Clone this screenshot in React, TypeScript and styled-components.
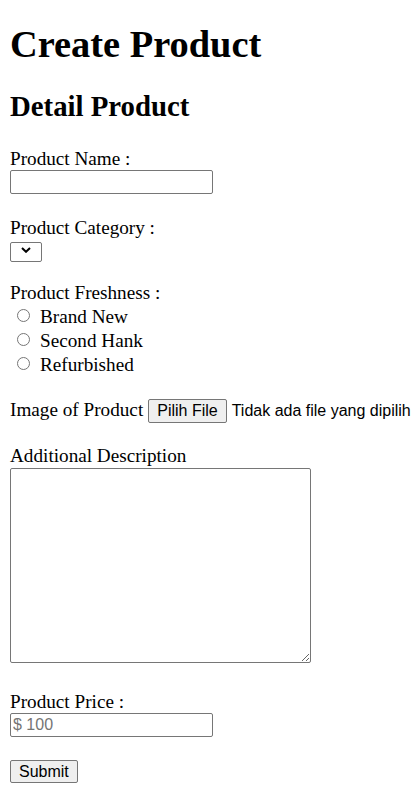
import React from "react";
import styled, { createGlobalStyle } from "styled-components";

const Global = createGlobalStyle`
  html, body { background: #fff; }
  body {
    margin: 0;
    font-family: "Liberation Serif", "Times New Roman", serif;
    font-size: 19.2px;
    color: #000;
  }
`;

const Page = styled.div`
  display: flow-root;
  padding: 0 10px;
`;

const Title = styled.h1`
  font-size: 38.4px;
  font-weight: bold;
  line-height: 44px;
  margin: 21.7px 0 24.8px;
`;

const Subtitle = styled.h2`
  font-size: 28.8px;
  font-weight: bold;
  line-height: 33px;
  margin: 0 0 24.5px;
`;

const Form = styled.form`
  display: flex;
  flex-direction: column;
  align-items: flex-start;
`;

const Field = styled.div<{ $after: number }>`
  display: flex;
  flex-direction: column;
  align-items: flex-start;
  margin-bottom: ${(p) => p.$after}px;
`;

const Label = styled.label<{ $gap?: number }>`
  display: block;
  line-height: 22px;
  white-space: nowrap;
  margin-bottom: ${(p) => p.$gap ?? 0}px;
`;

const TextInput = styled.input`
  box-sizing: border-box;
  width: 203px;
  height: 24px;
  margin: 0;
  padding: 1px 2px;
  border: 1px solid #767676;
  border-radius: 2px;
  font-family: "Liberation Sans", Arial, sans-serif;
  font-size: 16px;
  color: #000;
  background: #fff;
  outline: none;
  &::placeholder {
    color: #757575;
  }
`;

const SelectWrap = styled.div`
  position: relative;
  width: 32px;
  height: 20px;
`;

const Select = styled.select`
  appearance: none;
  box-sizing: border-box;
  width: 32px;
  height: 20px;
  margin: 0;
  padding: 0;
  border: 1px solid #767676;
  border-radius: 2px;
  background: #fff;
  font-family: "Liberation Sans", Arial, sans-serif;
  font-size: 16px;
`;

const Chevron = styled.svg`
  position: absolute;
  left: 11px;
  top: 6.5px;
  pointer-events: none;
`;

const RadioList = styled.div`
  display: flex;
  flex-direction: column;
`;

const RadioRow = styled.label`
  display: flex;
  align-items: center;
  height: 24px;
  line-height: 22px;
  white-space: nowrap;
`;

const Radio = styled.input`
  appearance: none;
  flex-shrink: 0;
  box-sizing: border-box;
  width: 13px;
  height: 13px;
  margin: 0 10.5px 2px 6.5px;
  border: 1px solid #767676;
  border-radius: 50%;
  background: #fff;
`;

const FileRow = styled.div`
  display: flex;
  align-items: baseline;
  line-height: 22px;
  white-space: nowrap;
  margin-bottom: 22px;
  & > * {
    flex-shrink: 0;
  }
`;

const FileLabel = styled.span`
  margin-right: 5px;
`;

const Button = styled.button`
  box-sizing: border-box;
  flex-shrink: 0;
  height: 24px;
  margin: 0;
  padding: 0 8px;
  border: 1px solid #767676;
  border-radius: 2px;
  background: #efefef;
  color: #000;
  font-family: "Liberation Sans", Arial, sans-serif;
  font-size: 16px;
  line-height: 20px;
  white-space: nowrap;
`;

const FileText = styled.span`
  margin-left: 5px;
  font-family: "Liberation Sans", Arial, sans-serif;
  font-size: 16px;
  white-space: nowrap;
`;

const TextArea = styled.textarea`
  box-sizing: border-box;
  width: 301px;
  height: 195px;
  margin: 0;
  padding: 2px;
  border: 1px solid #767676;
  border-radius: 2px;
  font-family: "Liberation Mono", monospace;
  font-size: 16px;
  outline: none;
`;

const Submit = styled(Button)`
  height: 23px;
  line-height: 19px;
`;

export default function App() {
  return (
    <Page>
      <Global />
      <Title>Create Product</Title>
      <Subtitle>Detail Product</Subtitle>
      <Form onSubmit={(e) => e.preventDefault()}>
        <Field $after={23}>
          <Label htmlFor="name">Product Name :</Label>
          <TextInput id="name" type="text" />
        </Field>
        <Field $after={21}>
          <Label htmlFor="cat" $gap={2}>Product Category :</Label>
          <SelectWrap>
            <Select id="cat" defaultValue="">
              <option value=""></option>
            </Select>
            <Chevron width="10" height="6" viewBox="0 0 10 6">
              <path d="M1 1l4 3.8L9 1" fill="none" stroke="#000" strokeWidth="2" />
            </Chevron>
          </SelectWrap>
        </Field>
        <Field $after={22}>
          <Label $gap={1}>Product Freshness :</Label>
          <RadioList>
            <RadioRow>
              <Radio type="radio" name="fresh" />
              Brand New
            </RadioRow>
            <RadioRow>
              <Radio type="radio" name="fresh" />
              Second Hank
            </RadioRow>
            <RadioRow>
              <Radio type="radio" name="fresh" />
              Refurbished
            </RadioRow>
          </RadioList>
        </Field>
        <FileRow>
          <FileLabel>Image of Product</FileLabel>
          <Button type="button">Pilih File</Button>
          <FileText>Tidak ada file yang dipilih</FileText>
        </FileRow>
        <Field $after={28}>
          <Label htmlFor="desc" $gap={1}>Additional Description</Label>
          <TextArea id="desc" />
        </Field>
        <Field $after={23}>
          <Label htmlFor="price">Product Price :</Label>
          <TextInput id="price" type="text" placeholder="$ 100" />
        </Field>
        <Submit type="submit">Submit</Submit>
      </Form>
    </Page>
  );
}
